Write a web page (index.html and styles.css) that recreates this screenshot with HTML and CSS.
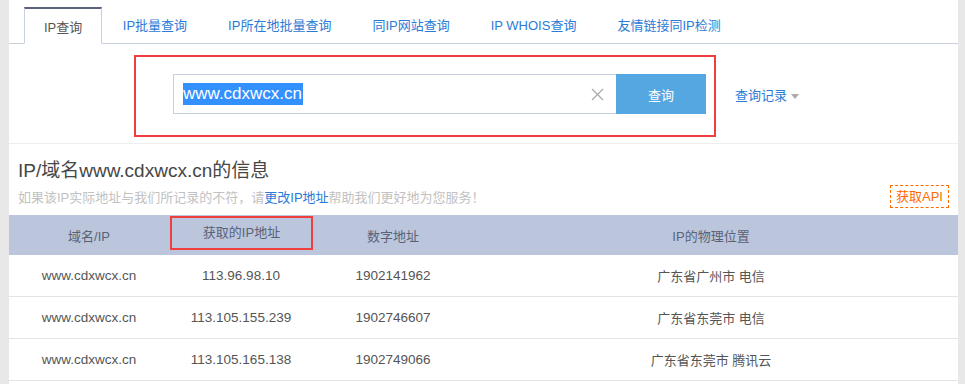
FILE: index.html
```html
<!DOCTYPE html>
<html lang="zh-CN">
<head>
    <meta charset="UTF-8">
    <meta name="viewport" content="width=device-width, initial-scale=1.0">
    <title>IP查询</title>
    <link rel="stylesheet" href="styles.css">
</head>
<body>
    <div class="page">
        <ul class="tabs">
            <li class="tab active">IP查询</li>
            <li class="tab">IP批量查询</li>
            <li class="tab">IP所在地批量查询</li>
            <li class="tab">同IP网站查询</li>
            <li class="tab">IP WHOIS查询</li>
            <li class="tab">友情链接同IP检测</li>
        </ul>

        <div class="search">
            <div class="mark-box">
                <div class="input">
                    <span class="selected">www.cdxwcx.cn</span>
                    <svg class="clear" width="13" height="13" viewBox="0 0 13 13">
                        <path d="M1 1 L12 12 M12 1 L1 12" stroke="#a9a9a9" stroke-width="1.2" fill="none"/>
                    </svg>
                </div>
                <button class="btn">查询</button>
            </div>
            <a class="history">查询记录<i class="caret"></i></a>
        </div>

        <div class="info-head">
            <h2>IP/域名www.cdxwcx.cn的信息</h2>
            <div class="sub">
                <p>如果该IP实际地址与我们所记录的不符，请<a>更改IP地址</a>帮助我们更好地为您服务！</p>
                <span class="api">获取API</span>
            </div>
        </div>

        <table class="result">
            <colgroup>
                <col style="width:160px">
                <col style="width:144px">
                <col style="width:160px">
                <col>
            </colgroup>
            <thead>
                <tr>
                    <th>域名/IP</th>
                    <th class="marked"><span>获取的IP地址</span></th>
                    <th>数字地址</th>
                    <th>IP的物理位置</th>
                </tr>
            </thead>
            <tbody>
                <tr>
                    <td>www.cdxwcx.cn</td>
                    <td>113.96.98.10</td>
                    <td>1902141962</td>
                    <td>广东省广州市 电信</td>
                </tr>
                <tr>
                    <td>www.cdxwcx.cn</td>
                    <td>113.105.155.239</td>
                    <td>1902746607</td>
                    <td>广东省东莞市 电信</td>
                </tr>
                <tr>
                    <td>www.cdxwcx.cn</td>
                    <td>113.105.165.138</td>
                    <td>1902749066</td>
                    <td>广东省东莞市 腾讯云</td>
                </tr>
            </tbody>
        </table>
    </div>
</body>
</html>
```

FILE: styles.css
```css
body {
    margin: 0;
    background: #e8e8e8;
    font-family: "Liberation Sans", "Noto Sans CJK SC", sans-serif;
    font-size: 13px;
    color: #555;
}

.page {
    margin: 0 7px 0 9px;
    min-height: 384px;
    background: #fff;
}

/* tabs */
.tabs {
    display: flex;
    margin: 0;
    padding: 7px 0 0 15px;
    list-style: none;
    border-bottom: 1px solid #c9d1e1;
}

.tab {
    padding: 0 20.5px;
    height: 35px;
    line-height: 37px;
    color: #2b7bd6;
    cursor: pointer;
}

.tab.active {
    padding: 0 19px;
    height: 34px;
    margin-bottom: -1px;
    color: #555;
    background: #fff;
    border: 1px solid #c9d1e1;
    border-top: 2px solid #596277;
    border-bottom: 1px solid #fff;
}

/* search */
.search {
    display: flex;
    align-items: center;
    padding: 11px 0 6px 125px;
    border-bottom: 1px solid #eeeeee;
}

.mark-box {
    display: flex;
    padding: 17px 8px 21px 37px;
    border: 2px solid #f03e3e;
}

.input {
    display: flex;
    align-items: center;
    width: 443px;
    height: 40px;
    box-sizing: border-box;
    border: 1px solid #c6cee0;
    border-right: none;
}

.selected {
    margin-left: 9px;
    padding-right: 1px;
    line-height: 22px;
    font-size: 17px;
    color: #fff;
    background: #3390ff;
}

.clear {
    margin-left: auto;
    margin-right: 12px;
}

.btn {
    width: 90px;
    height: 40px;
    border: none;
    background: #55a7e1;
    color: #fff;
    font-family: inherit;
    font-size: 13px;
    cursor: pointer;
}

.history {
    margin: -4px 0 0 19px;
    color: #2b7bd6;
    cursor: pointer;
}

.caret {
    display: inline-block;
    margin-left: 4px;
    vertical-align: middle;
    border-top: 5px solid #aaa;
    border-left: 4px solid transparent;
    border-right: 4px solid transparent;
}

/* info */
.info-head {
    padding: 0 9px;
}

.info-head h2 {
    margin: 15px 0 0;
    line-height: 24px;
    font-size: 19px;
    font-weight: normal;
    color: #464646;
}

.sub {
    display: flex;
    justify-content: space-between;
    align-items: flex-end;
    margin: 2px 0 7px;
}

.sub p {
    margin: 0;
    line-height: 20px;
    color: #c2c2c2;
}

.sub a {
    color: #2b7bd6;
}

.api {
    padding: 0 5px;
    line-height: 21px;
    color: #ff6a00;
    border: 1px dashed #ff6a00;
}

/* table */
.result {
    width: 100%;
    border-collapse: collapse;
    table-layout: fixed;
}

.result th {
    height: 40px;
    padding: 0;
    font-weight: normal;
    color: #5a6276;
    background: #bbc6dd;
}

.result th:last-child,
.result td:last-child {
    padding-right: 9px;
}

.result th.marked {
    vertical-align: top;
}

.marked span {
    display: block;
    margin: 1px 0 0 1px;
    height: 30px;
    line-height: 30px;
    border: 2px solid #f03e3e;
}

.result td {
    height: 41px;
    padding: 0;
    text-align: center;
    font-size: 13.5px;
    color: #555;
    border-bottom: 1px solid #e4e4e4;
}

.result td:last-child {
    font-size: 13px;
}
```
